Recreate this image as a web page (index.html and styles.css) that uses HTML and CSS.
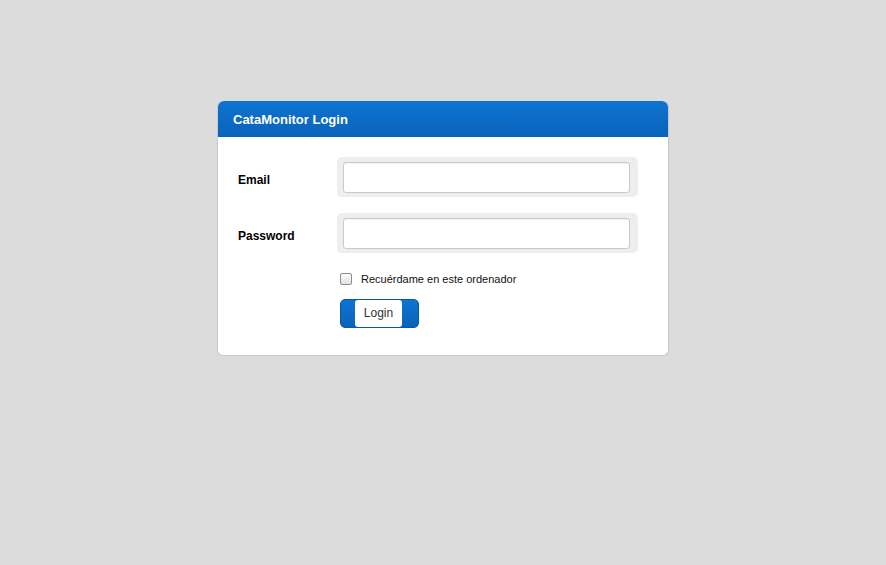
FILE: index.html
```html
<!DOCTYPE html>
<html>
<head>
<meta charset="utf-8">
<link rel="stylesheet" href="styles.css">
</head>
<body>
<div class="card">
  <div class="card-header">CataMonitor Login</div>
  <form class="card-body">
    <div class="row">
      <label class="label" for="email">Email</label>
      <div class="field-wrap"><input class="field" id="email" type="text"></div>
    </div>
    <div class="row row-pass">
      <label class="label" for="pass">Password</label>
      <div class="field-wrap"><input class="field" id="pass" type="password"></div>
    </div>
    <div class="remember">
      <span class="check"></span>
      <span class="remember-text">Recuérdame en este ordenador</span>
    </div>
    <div class="actions">
      <button class="btn" type="button"><span class="btn-inner">Login</span></button>
    </div>
  </form>
</div>
</body>
</html>
```
FILE: styles.css
```css
html, body {
  margin: 0;
  padding: 0;
  background: #dcdcdc;
  font-family: "Liberation Sans", Arial, sans-serif;
}
.card {
  width: 450px;
  margin: 101px 0 0 217px;
  background: #fff;
  border: 1px solid #c8c8c8;
  border-top: none;
  border-radius: 6px;
}
.card-header {
  height: 35px;
  line-height: 36px;
  padding: 1px 0 0 15px;
  background: linear-gradient(#0d74d2, #0a63ba);
  border-radius: 6px 6px 0 0;
  color: #fff;
  font-weight: bold;
  font-size: 13px;
}
.card-body {
  margin: 0;
  padding: 20px 0 27px 0;
}
.row {
  display: flex;
  align-items: center;
}
.row-pass {
  margin-top: 16px;
}
.label {
  width: 99px;
  padding-left: 20px;
  margin-top: 6px;
  font-size: 12px;
  font-weight: bold;
  color: #000;
}
.field-wrap {
  width: 287px;
  height: 31px;
  padding: 5px 8px 4px 6px;
  background: #eeeeee;
  border-radius: 5px;
}
.field {
  display: block;
  box-sizing: border-box;
  width: 287px;
  height: 31px;
  margin: 0;
  border: 1px solid #c9c9c9;
  border-radius: 3px;
  background: #fff;
  box-shadow: inset 0 1px 1px rgba(0,0,0,0.05);
}
.remember {
  display: flex;
  align-items: center;
  margin: 19px 0 0 122px;
  height: 14px;
}
.check {
  box-sizing: border-box;
  width: 12px;
  height: 12px;
  border: 1px solid #8e8e8e;
  border-radius: 2px;
  background: linear-gradient(#fcfcfc, #e2e2e2);
}
.remember-text {
  margin-left: 9px;
  font-size: 11px;
  color: #111;
}
.actions {
  margin: 13px 0 0 122px;
}
.btn {
  display: block;
  box-sizing: border-box;
  width: 79px;
  height: 29px;
  margin: 0;
  padding: 0 0 0 14px;
  border: 1px solid #0858a8;
  border-radius: 5px;
  background: linear-gradient(#0e74d4, #0a62b8);
  text-align: left;
}
.btn-inner {
  display: block;
  width: 47px;
  height: 27px;
  line-height: 27px;
  background: #fff;
  border-radius: 3px;
  text-align: center;
  font-family: "Liberation Sans", Arial, sans-serif;
  font-size: 12px;
  color: #333;
}
```
